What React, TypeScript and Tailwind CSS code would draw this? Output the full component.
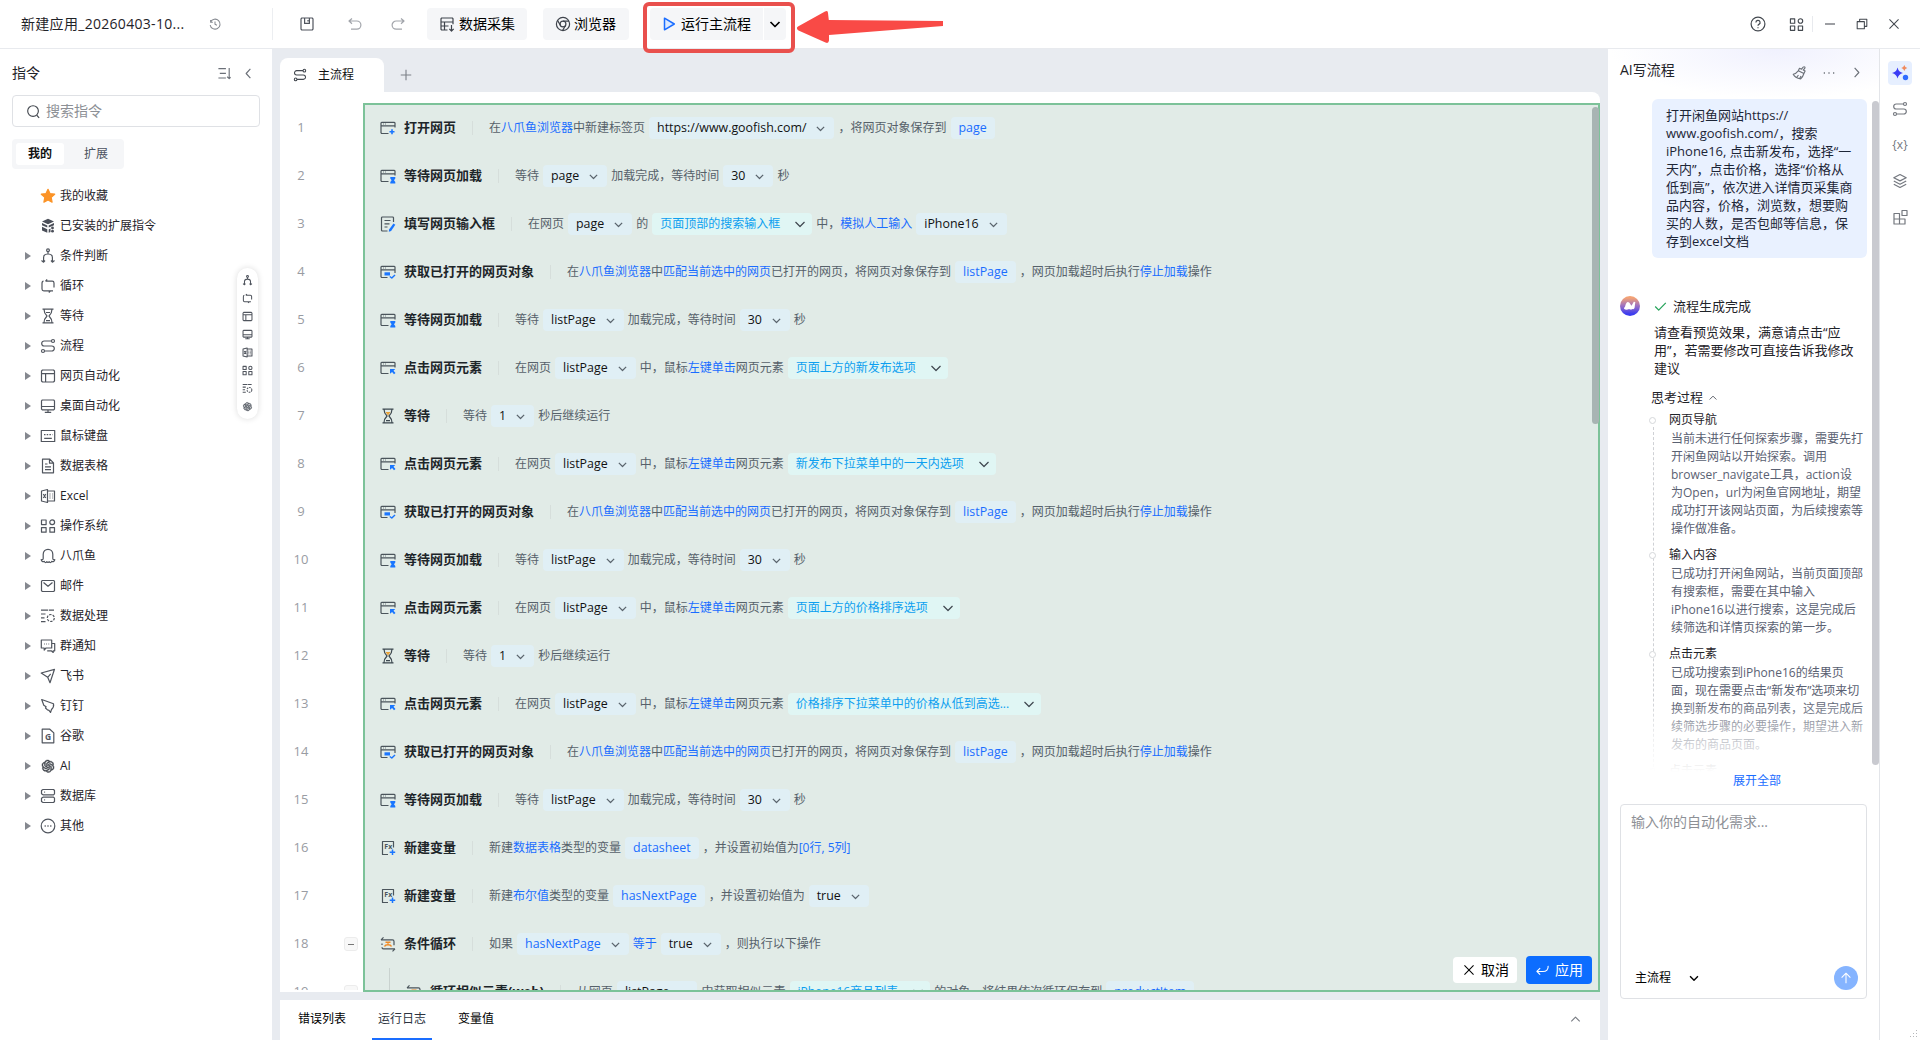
import type { ReactNode } from 'react'
import { AiOutlineOpenAI } from 'react-icons/ai'

/** line icons, drawn on a 16 x 16 grid */
const icons: Record<string, ReactNode> = {
    star: <path fill="#fb9327" stroke="#fb9327" d="M8 1.3l2 4.3 4.7.6-3.5 3.2.9 4.8L8 11.9l-4.1 2.3.9-4.8L1.3 6.2 6 5.6z" />,
    packages: (
        <g fill="currentColor" stroke="none">
            <path d="M8 .8l6 2.7-6 2.7-6-2.7zM2 5l5.3 2.4v2.2L2 7.2zM14 5L8.7 7.4v2.2L14 7.2zM2 8.8l5.3 2.4v3.6L2 12.4zM8.7 11.4l1.8-.8v3.4l-1.8.8z" />
            <circle cx="12.5" cy="9.9" r="1.4" />
            <circle cx="12.5" cy="13.2" r="1.4" />
        </g>
    ),
    branch: (
        <>
            <circle cx="8" cy="2.2" r="1.4" />
            <path d="M8 3.6V6M3.6 14V9.5C3.6 7.2 5.5 6 8 6s4.4 1.2 4.4 3.5V14M1.5 12.5l2.1 1.7 1.4-1.7M11 12.5l1.4 1.7 2.1-1.7" />
        </>
    ),
    loop: <path d="M5.5 3.2h6.7c1 0 1.8.8 1.8 1.8v4.5M5.5 3.2l1.7-1.7M10.5 12.8H3.8c-1 0-1.8-.8-1.8-1.8V5.5c0-1 .5-2.3 1.5-2.3M10.5 12.8l-1.7 1.7M10.5 12.8H13" />,
    hourglass: <path d="M2.5 1.2h11M2.5 14.8h11M4 1.2c0 3.3 1 4.8 3 6.8-2 2-3 3.5-3 6.8M12 1.2c0 3.3-1 4.8-3 6.8 2 2 3 3.5 3 6.8M6 12.6h4M6 4.5h4" />,
    flow: (
        <>
            <circle cx="13" cy="3" r="1.5" />
            <circle cx="3" cy="13" r="1.5" />
            <path d="M11.5 3H4.2a2.5 2.5 0 0 0 0 5h7.6a2.5 2.5 0 0 1 0 5H4.5" />
        </>
    ),
    web: <path d="M2.5 2h11l1 1v10l-1 1h-11l-1-1V3zM1.5 5.6h13M5.6 5.6V14" />,
    desktop: <path d="M2.3 2h11.4l.8.8v8.2l-.8.8H2.3l-.8-.8V2.8zM1.5 8.5h13M8 11.8v2.5M4.8 14.3h6.4" />,
    keyboard: (
        <>
            <path d="M1.3 2.5h13.4v11H1.3zM4.2 10.3h7.6" />
            <path strokeDasharray="1.5 1.2" d="M4 6.6h8.5" />
        </>
    ),
    sheet: <path d="M2.5 1.2h7.3l3.7 3.7v9.9h-11zM9.5 1.5v3.7h3.7M5 6h2.5M5 8.8h6M5 11.6h6" />,
    excel: <path d="M7.5 1.5L1.5 3v10l6 1.5zM7.5 3h7v10h-7M3.3 6l2.5 4M5.8 6L3.3 10M9.5 6h1M9.5 8h1M9.5 10h1M12.3 6h.8M12.3 8h.8M12.3 10h.8" />,
    grid: (
        <>
            <path d="M1.5 2h4.6v4.6H1.5zM1.5 9.6h4.6v4.6H1.5zM9.9 9.6h4.6v4.6H9.9z" />
            <circle cx="12.2" cy="4.3" r="2.4" />
        </>
    ),
    octopus: <path d="M3.2 10.5V6.3C3.2 3.3 5.300 1.300 8 1.300s4.800 2 4.800 5v4.200c.1 1.200.9 1.400 2 1.200-.2 1.600-1.600 2.500-3.200 1.700-.3 1.300-1.600 1.600-2.300.3-.6.900-2 .9-2.600 0-.7 1.300-2 1-2.300-.3-1.600.8-3-.1-3.200-1.700 1.100.2 1.900 0 2-1.200z" />,
    mail: <path d="M2.3 2.5h11.4l.8.8v9.4l-.8.8H2.3l-.8-.8V3.3zM3.5 4.5L8 8.3l4.5-3.8" />,
    process: (
        <>
            <path d="M1 2.2h13M1 6h4.5M1 9.8h3.5M1 13.6h4.5" strokeDasharray="7 .8" />
            <circle cx="10.8" cy="10" r="3.5" strokeDasharray="2.4 1.2" />
        </>
    ),
    chat: <path d="M1.3 2h10.4v8H6l-1.8 2v-2H1.3zM12 5.5h2.7v7.3h-1.5v1.7l-2-1.7H7.2M4 6h.8M6.2 6H7M8.4 6h.8" />,
    plane: <path d="M1.2 5l13.3-3.7L10 14.7 7.7 9.3zM7.7 9.3l3-3.5" />,
    ding: <path d="M1.7 1.5l11.8 4.3c.6 2.4-.5 4.2-2 5.7l-1 3-1.5-2.2-1.5-.4-2-1.9.6-1.2-2.3-1.6z" />,
    google: (
        <>
            <path d="M2.2 1.2h7.6l4 3.7v9.9H2.2z" />
            <text x="8" y="11.5" textAnchor="middle" fontSize="8.5" fontWeight="700" fill="currentColor" stroke="none">G</text>
        </>
    ),
    database: <path d="M3 1.5h10.500l1 1v3.300l-1 1H3l-1.500-1V2.500zM3 9.200h10.500l1 1v3.300l-1 1H3l-1.500-1v-3.300zM4.200 4.100h.9M4.200 11.800h.9" />,
    other: (
        <>
            <circle cx="8" cy="8" r="6.8" />
            <path d="M4.6 8h1.2M7.4 8h1.2M10.2 8h1.2" strokeWidth="1.4" />
        </>
    ),
    save: <path d="M2.8 2h10.4l.8.8v10.4l-.8.8H2.8l-.8-.8V2.8zM5.6 2v5.4h4.8V2M9 4v1.5" />,
    undo: <path d="M5 2.5L2 5l3 2.7M2.2 5h7.6a4 4 0 0 1 0 8.2H4" />,
    redo: <path d="M11 2.5L14 5l-3 2.7M13.8 5H6.2a4 4 0 0 0 0 8.2H12" />,
    history: <path d="M3 3.5V6h2.5M3 5.6a5.7 5.7 0 1 1-.5 3.6M8 5v3.4l2.2 1" />,
    collect: <path d="M8.5 14H2.7l-.7-.7V2.7l.7-.7h10.6l.7.7v5.5M2 6h12M2 10h7.5M5.5 6v8M12.5 9v6M10.3 12.8l2.2 2.2 2.2-2.2" />,
    chrome: (
        <>
            <circle cx="8" cy="8" r="6.6" />
            <circle cx="8" cy="8" r="2.9" />
            <path d="M8 5.1h6M5.5 9.5L2.5 4.4M10.5 9.5l-3 5.1" />
        </>
    ),
    play: <path fill="#dbe9ff" strokeWidth="1.5" d="M3.5 2.2v11.6L13.3 8z" />,
    down: <path d="M3.5 6L8 10.5 12.5 6" />,
    up: <path d="M3.5 10L8 5.5l4.5 4.5" />,
    left: <path d="M10 3L5.5 8l4.5 5" />,
    right: <path d="M6 3l4.5 5L6 13" />,
    sort: <path d="M1.5 2.8h8M3 7.8h6.5M1.5 12.8h8M13 2v11.5M10.8 11.5l2.2 2 1.5-1.5" />,
    search: (
        <>
            <circle cx="7.5" cy="7.5" r="5.7" />
            <path d="M11.5 12l2.5 2.7" />
        </>
    ),
    plus: <path strokeWidth="1.5" d="M8 1v14M1 8h14" />,
    help: (
        <>
            <circle cx="8" cy="8" r="6.9" />
            <path d="M5.9 6.5a2.1 2.1 0 1 1 3 1.9c-.6.3-.9.6-.9 1.3M8 11.2v1" />
        </>
    ),
    minimize: <path d="M2.3 8h11.4" />,
    restore: <path d="M2.5 5.3h8.2v8.2H2.5zM5.3 5V2.5h8.2v8.2H11" />,
    close: <path d="M2.8 2.8l10.4 10.4M13.2 2.8L2.8 13.2" />,
    broom: <path d="M13.8 2.3c-1.3-1.3-2.6.7-3.6 2.2L8 3.5 6.7 6.2l6 2.9L14 6.4l-2-1c.9-1.3 2.6-2.2 1.8-3.1zM6.7 6.2C5 8.3 3.2 9.4 1.3 9.8c1 2.2 4.2 4.4 8 5 1.7-1.5 2.7-3.5 3.4-5.7M5.2 12.8l1.7-2M8.3 14.2l1.3-2.5" />,
    dots: <path strokeWidth="1.6" d="M2 8h1.4M7.3 8h1.4M12.6 8H14" />,
    layers: <path d="M8 1.5l6.2 3.2L8 7.9 1.8 4.7zM1.8 8L8 11.2 14.2 8M1.8 11.3L8 14.5l6.2-3.2" />,
    widgets: <path d="M2 4.5h5.5V10H2zM2 10h5.5v5H2zM7.5 10H13v5H7.5zM10 1.5h5v5h-5z" />,
    vars: <text x="8" y="12.2" textAnchor="middle" fontSize="12" fill="currentColor" stroke="none">{'{x}'}</text>,
    check: <path stroke="#25a35a" strokeWidth="1.5" d="M1.5 8l4.3 4.5L14.5 3.5" />,
    enter: <path d="M14 3c.5 4-2 6-5.5 6H2M5.5 5.5L2 9l3.5 3.5" />,
    arrowUp: <path d="M8 14V2.5M3 7.5l5-5 5 5" />,
    // step icons: browser window with a blue mark
    open: (
        <>
            <path d="M8.5 13.5H1.7l-.7-.7V3l.7-.7h12.6l.7.7v4.5M1 5.8h14M3 4h.7M5.2 4h.7" />
            <path stroke="#1a76ff" strokeWidth="1.6" d="M12 9.3v5M9.5 11.8h5" />
        </>
    ),
    load: (
        <>
            <path d="M8.5 13.5H1.7l-.7-.7V3l.7-.7h12.6l.7.7v4.5M1 5.8h14M3 4h.7M5.2 4h.7" />
            <path fill="#1a76ff" stroke="none" d="M10.3 9h5v1.5l-1.3 1.8 1.3 1.8v1.5h-5v-1.5l1.3-1.8-1.3-1.8z" />
        </>
    ),
    click: (
        <>
            <path d="M8.5 13.5H1.7l-.7-.7V3l.7-.7h12.6l.7.7v4.5M1 5.8h14M3 4h.7M5.2 4h.7" />
            <path fill="#1a76ff" stroke="none" d="M10 9h5.2l-1.7 1.7 2 2.3-1.5 1.3-1.9-2.3L10 13.7z" />
        </>
    ),
    fetch: (
        <>
            <path d="M7.5 13.5H1.7l-.7-.7V3l.7-.7h12.6l.7.7v6M1 5.8h14M3 4h.7M5.2 4h.7" />
            <path fill="#1a76ff" stroke="none" d="M4.5 8.3H10v3.2H4.5z" />
            <path stroke="#1a76ff" strokeWidth="1.5" d="M9.8 12.5l2 1.5 3.2-3" />
        </>
    ),
    input: (
        <>
            <path d="M7.5 15H2.2l-.7-.7V1.7l.7-.7h10.6l.7.7V6M4.5 4.5h6M4.5 7.8h5M4.5 11h3" />
            <path fill="#1a76ff" stroke="none" d="M13.5 7.5l1.8 1.2-4.2 6.3-2.3.8.3-2.4z" />
        </>
    ),
    variable: (
        <>
            <path d="M8 14.5H2.5V1.5h11v6" />
            <text x="4.3" y="9" fontSize="7" fontWeight="700" fill="currentColor" stroke="none">Fx</text>
            <path stroke="#1a76ff" strokeWidth="1.5" d="M12.5 9.5v5.5M9.7 12.3h5.5" />
        </>
    ),
    condLoop: (
        <>
            <path d="M1 3.8h11.5c1 0 1.5.8 1.5 1.7v3.7M1 3.8l2.5-2.5M15 12.8H3.5C2.5 12.8 2 12 2 11.2M15 12.8l-2.5 2.5M2 9V7.5" />
            <path stroke="#f08a24" strokeWidth="1.5" d="M5.5 6.3h5M8 6.3v1.5M4.5 10.5C5.5 8 10.5 8 11.5 10.5" />
        </>
    ),
}

function Icon({ name, className = 'size-4' }: { name: string; className?: string }) {
    return (
        <svg
            viewBox="0 0 16 16"
            fill="none"
            stroke="currentColor"
            strokeWidth={1.2}
            strokeLinejoin="round"
            className={`shrink-0 ${className}`}
        >
            {icons[name]}
        </svg>
    )
}

const menu = [
    ['branch', '条件判断'],
    ['loop', '循环'],
    ['hourglass', '等待'],
    ['flow', '流程'],
    ['web', '网页自动化'],
    ['desktop', '桌面自动化'],
    ['keyboard', '鼠标键盘'],
    ['sheet', '数据表格'],
    ['excel', 'Excel'],
    ['grid', '操作系统'],
    ['octopus', '八爪鱼'],
    ['mail', '邮件'],
    ['process', '数据处理'],
    ['chat', '群通知'],
    ['plane', '飞书'],
    ['ding', '钉钉'],
    ['google', '谷歌'],
    ['ai', 'AI'],
    ['database', '数据库'],
    ['other', '其他'],
]

/** plain string = grey text, otherwise [kind, text] */
type Part = string | ['link' | 'select' | 'var' | 'varSelect' | 'element', string]
type Step = { icon: string; title: string; parts: Part[]; fold?: boolean; nested?: boolean }

const fetchPage: Step = {
    icon: 'fetch',
    title: '获取已打开的网页对象',
    parts: [
        '在', ['link', '八爪鱼浏览器'], '中', ['link', '匹配当前选中的网页'], '已打开的网页，将网页对象保存到',
        ['var', 'listPage'], '，网页加载超时后执行', ['link', '停止加载'], '操作',
    ],
}
const loadPage = (page: string): Step => ({
    icon: 'load',
    title: '等待网页加载',
    parts: ['等待', ['select', page], '加载完成，等待时间', ['select', '30'], '秒'],
})
const clickOn = (target: string): Step => ({
    icon: 'click',
    title: '点击网页元素',
    parts: ['在网页', ['select', 'listPage'], '中，鼠标', ['link', '左键单击'], '网页元素', ['element', target]],
})
const pause: Step = { icon: 'hourglassColor', title: '等待', parts: ['等待', ['select', '1'], '秒后继续运行'] }

const steps: Step[] = [
    {
        icon: 'open',
        title: '打开网页',
        parts: ['在', ['link', '八爪鱼浏览器'], '中新建标签页', ['select', 'https://www.goofish.com/'], '，将网页对象保存到', ['var', 'page']],
    },
    loadPage('page'),
    {
        icon: 'input',
        title: '填写网页输入框',
        parts: ['在网页', ['select', 'page'], '的', ['element', '页面顶部的搜索输入框'], '中，', ['link', '模拟人工输入'], ['select', 'iPhone16']],
    },
    fetchPage,
    loadPage('listPage'),
    clickOn('页面上方的新发布选项'),
    pause,
    clickOn('新发布下拉菜单中的一天内选项'),
    fetchPage,
    loadPage('listPage'),
    clickOn('页面上方的价格排序选项'),
    pause,
    clickOn('价格排序下拉菜单中的价格从低到高选...'),
    fetchPage,
    loadPage('listPage'),
    {
        icon: 'variable',
        title: '新建变量',
        parts: ['新建', ['link', '数据表格'], '类型的变量', ['var', 'datasheet'], '，并设置初始值为', ['link', '[0行, 5列]']],
    },
    {
        icon: 'variable',
        title: '新建变量',
        parts: ['新建', ['link', '布尔值'], '类型的变量', ['var', 'hasNextPage'], '，并设置初始值为', ['select', 'true']],
    },
    {
        icon: 'condLoop',
        title: '条件循环',
        fold: true,
        parts: ['如果', ['varSelect', 'hasNextPage'], ['link', '等于'], ['select', 'true'], '，则执行以下操作'],
    },
    {
        icon: 'condLoop',
        title: '循环相似元素(web)',
        fold: true,
        nested: true,
        parts: ['从网页', ['select', 'listPage'], '中获取相似元素', ['element', 'iPhone16商品列表'], '的对象，将结果依次循环保存到', ['var', 'productItem']],
    },
]

function StepPart({ part }: { part: Part }) {
    if (typeof part === 'string') return <span>{part}</span>
    const [kind, text] = part
    if (kind === 'link') return <span className="text-[#1a6dff]">{text}</span>
    if (kind === 'element') {
        return (
            <span className="mx-1 flex h-[22px] items-center rounded bg-[#e0f6f4] pr-1 pl-2 text-[#0c9ff0]">
                <span>{text}</span>
                <Icon name="down" className="ml-3 size-4 text-[#3f474f]" />
            </span>
        )
    }
    return (
        <span
            className={`mx-1 flex h-[22px] items-center rounded bg-[#e0eff5] pl-2 text-[12.4px]
            ${kind === 'select' ? 'text-[#111]' : 'text-[#1a6dff]'}
            ${kind === 'var' ? 'pr-2' : 'pr-[7px]'}`}
        >
            <span className="pt-px">{text}</span>
            {kind !== 'var' && <Icon name="down" className="ml-2 size-[13px] text-[#5b656e] [stroke-width:1.5]" />}
        </span>
    )
}

function StepRow({ step, index }: { step: Step; index: number }) {
    return (
        <div className="flex h-12 shrink-0 items-center whitespace-nowrap">
            <span className="w-[42px] text-center text-[13px] text-[#999ca3]">{index}</span>
            <span className="flex w-[41px] justify-end pr-[5px]">
                {step.fold && (
                    <span className="flex size-[14px] items-center justify-center rounded-[3px] border border-[#ececec] bg-[#f8f8f8]">
                        <span className="h-px w-1.5 bg-[#777]" />
                    </span>
                )}
            </span>
            <div className={`flex h-full items-center ${step.nested ? 'ml-[26px] border-l border-[#c9d2cf] pl-4' : 'pl-[17px]'}`}>
                {step.icon === 'hourglassColor' ? (
                    <svg viewBox="0 0 16 16" fill="none" stroke="currentColor" strokeWidth={1.2} className="size-4 shrink-0 text-[#3d4850]">
                        {icons.hourglass}
                        <path fill="#e8a33a" stroke="none" d="M5.5 4h5L8 7.5z" />
                    </svg>
                ) : (
                    <Icon name={step.icon} className="size-4 text-[#4b555c]" />
                )}
                <span className="ml-2 text-[13px] font-bold text-[#1d2529]">{step.title}</span>
                <span className="mx-4 h-3.5 w-px bg-[#d6dedb]" />
                <div className="flex items-center text-xs text-[#56616a]">
                    {step.parts.map((part, i) => (
                        <StepPart key={i} part={part} />
                    ))}
                </div>
            </div>
        </div>
    )
}

function Header() {
    return (
        <header className="flex h-[49px] shrink-0 items-center border-b border-[#e8eaee] bg-white text-sm">
            <div className="flex w-[272px] items-center">
                <span className="ml-[21px] w-[187px] tracking-[0.3px] text-[#1f2329]">新建应用_20260403-10...</span>
                <Icon name="history" className="size-[14px] text-[#84888f]" />
            </div>
            <div className="h-8 w-px bg-[#eceef1]" />
            <Icon name="save" className="ml-[26px] size-4 text-[#50555e]" />
            <Icon name="undo" className="ml-8 size-4 text-[#a2a5ab]" />
            <Icon name="redo" className="ml-[27px] size-4 text-[#a2a5ab]" />
            <button className="ml-[21px] flex h-8 w-[100px] items-center rounded bg-[#f5f6f8] pl-3 text-black">
                <Icon name="collect" className="mr-1 size-4 text-[#3f444c]" />
                数据采集
            </button>
            <button className="ml-4 flex h-8 w-[86px] items-center rounded bg-[#f5f6f8] pl-3 text-black">
                <Icon name="chrome" className="mr-[3px] size-4 text-[#3f444c]" />
                浏览器
            </button>
            <div className="relative ml-[21px] flex h-8">
                <button className="flex w-[113px] items-center rounded-l bg-[#f5f6f8] pl-[11px] text-black">
                    <Icon name="play" className="mr-1 size-4 text-[#1a6dff]" />
                    运行主流程
                </button>
                <button className="ml-px flex w-[22px] items-center justify-center rounded-r bg-[#f5f6f8]">
                    <Icon name="down" className="size-4 text-black [stroke-width:1.7]" />
                </button>
                {/* highlight frame and pointer */}
                <div className="absolute -top-1.5 -left-[7px] z-10 h-[51px] w-[152px] rounded-md border-4 border-[#e9504d]" />
                <svg viewBox="0 0 148 36" className="absolute top-0.5 left-[146px] z-10 h-9 w-[148px] fill-[#f94a46]">
                    <path d="M1 18.5Q.5 17.5 2 16.5L29 1.5q3-1.5 3 1.5l.8 7L147 11v5L33 25v5.5q-.5 3.5-3.5 2L2.5 20.5Q1 19.5 1 18.5z" />
                </svg>
            </div>
            <div className="ml-auto flex items-center text-[#43484f]">
                <Icon name="help" className="size-4" />
                <Icon name="grid" className="ml-[23px] size-[15px]" />
                <div className="ml-2 h-4 w-px bg-[#e8eaee]" />
                <Icon name="minimize" className="ml-2.5 size-[14px]" />
                <Icon name="restore" className="ml-[18px] size-[14px]" />
                <Icon name="close" className="mr-[19px] ml-[18px] size-[14px]" />
            </div>
        </header>
    )
}

function Sidebar() {
    return (
        <aside className="relative w-[272px] shrink-0 bg-white">
            <div className="flex h-[46px] items-center pt-0.5 pr-[16px] pl-3 text-sm text-[#1f2329]">
                指令
                <Icon name="sort" className="ml-auto size-[15px] text-[#6b7078]" />
                <Icon name="left" className="ml-[9px] size-[15px] text-[#6b7078]" />
            </div>
            <div className="mx-3 flex h-8 items-center rounded border border-[#dfe1e5] pl-[13px] text-sm text-[#8d9096]">
                <Icon name="search" className="mr-[5px] size-[15px] text-[#43484f]" />
                搜索指令
            </div>
            <div className="mt-3 ml-3 flex h-[30px] w-28 items-center rounded bg-[#f5f6f8] p-1 text-xs">
                <span className="flex h-[22px] w-12 items-center justify-center rounded-[3px] bg-white font-bold text-[#111]">我的</span>
                <span className="flex-1 pl-5 text-[#4c5260]">扩展</span>
            </div>
            <ul className="mt-3 text-xs text-[#1f2329]">
                <li className="flex h-[30px] items-center pl-10">
                    <Icon name="star" className="mr-1 size-4" />
                    我的收藏
                </li>
                <li className="flex h-[30px] items-center pl-10">
                    <Icon name="packages" className="mr-1 size-4 text-[#4a4e58]" />
                    已安装的扩展指令
                </li>
                {menu.map(([icon, label]) => (
                    <li key={label} className="flex h-[30px] items-center pl-[25px]">
                        <svg viewBox="0 0 6 8" className="mr-[9px] h-2 w-1.5 fill-[#85888f]">
                            <path d="M0 0l6 4-6 4z" />
                        </svg>
                        {icon === 'ai' ? (
                            <AiOutlineOpenAI className="mr-1 size-4 stroke-[#43484f] text-[#43484f] [stroke-width:28]" />
                        ) : (
                            <Icon name={icon} className="mr-1 size-4 text-[#50555e]" />
                        )}
                        {label}
                    </li>
                ))}
            </ul>
            {/* quick access strip */}
            <div className="absolute top-[219px] right-[14px] flex h-[151px] w-[21px] flex-col items-center gap-[7px] rounded-full bg-white pt-[7px] text-[#50555e] shadow-[0_0_6px_rgba(0,0,0,0.14)]">
                {['branch', 'loop', 'web', 'desktop', 'excel', 'grid', 'process'].map((name) => (
                    <Icon key={name} name={name} className="size-[11px] [stroke-width:1.5]" />
                ))}
                <AiOutlineOpenAI className="size-[11px] shrink-0 stroke-[#50555e] [stroke-width:30]" />
            </div>
        </aside>
    )
}

function Editor() {
    return (
        <main className="flex w-[1336px] shrink-0 flex-col bg-[#e8ebf0] px-2">
            <div className="flex h-[43px] shrink-0 items-end">
                <div className="flex h-[34px] w-[104px] items-center rounded-t-lg bg-white pl-[13px] text-xs text-[#111]">
                    <Icon name="flow" className="mr-[11px] size-[14px] text-[#43484f]" />
                    主流程
                </div>
                <Icon name="plus" className="mb-[11px] ml-4 size-3 text-[#7d8188]" />
            </div>
            <div className="relative h-[900px] shrink-0 overflow-hidden rounded-tr-lg bg-white">
                {/* generated steps preview */}
                <div className="absolute top-[11px] right-0 bottom-0 left-[83px] border-2 border-[#7cc299] bg-[#e1ebe7]">
                    <div className="absolute top-0.5 -right-px h-[317px] w-[7px] rounded-full bg-[#a8b4b3]" />
                </div>
                <div className="relative h-[898px] overflow-hidden pt-3">
                    {steps.map((step, i) => (
                        <StepRow key={i} step={step} index={i + 1} />
                    ))}
                </div>
                <div className="absolute right-2 bottom-2 flex items-center gap-[9px] text-sm">
                    <button className="flex h-[26px] w-16 items-center rounded bg-white pl-[9px] text-black">
                        <Icon name="close" className="mr-[5px] size-[14px]" />
                        取消
                    </button>
                    <button className="flex h-7 w-[66px] items-center rounded bg-[#0c6dff] pl-[9px] text-white">
                        <Icon name="enter" className="mr-[5px] size-[15px]" />
                        应用
                    </button>
                </div>
            </div>
            <div className="mt-2 flex h-10 shrink-0 items-stretch bg-white text-xs text-black">
                <span className="flex items-center pr-[26px] pb-0.5 pl-[18px]">错误列表</span>
                <span className="flex items-center border-b-2 border-[#1a6dff] px-1.5 text-[#2c3340]">运行日志</span>
                <span className="flex items-center pb-0.5 pl-[26px]">变量值</span>
                <Icon name="up" className="mt-3 mr-[17px] ml-auto size-[15px] text-[#777b82]" />
            </div>
        </main>
    )
}

const thoughts = [
    {
        title: '网页导航',
        lines: ['当前未进行任何探索步骤，需要先打', '开闲鱼网站以开始探索。调用', 'browser_navigate工具，action设', '为Open，url为闲鱼官网地址，期望', '成功打开该网站页面，为后续搜索等', '操作做准备。'],
    },
    {
        title: '输入内容',
        lines: ['已成功打开闲鱼网站，当前页面顶部', '有搜索框，需要在其中输入', 'iPhone16以进行搜索，这是完成后', '续筛选和详情页探索的第一步。'],
    },
    {
        title: '点击元素',
        lines: ['已成功搜索到iPhone16的结果页', '面，现在需要点击“新发布”选项来切', '换到新发布的商品列表，这是完成后', '续筛选步骤的必要操作，期望进入新', '发布的商品页面。'],
    },
    { title: '点击元素', lines: [] },
]

const prompt = [
    '打开闲鱼网站https://',
    'www.goofish.com/，搜索',
    'iPhone16, 点击新发布，选择“一',
    '天内”，点击价格，选择“价格从',
    '低到高”，依次进入详情页采集商',
    '品内容，价格，浏览数，想要购',
    '买的人数，是否包邮等信息，保',
    '存到excel文档',
]

function Lines({ lines }: { lines: string[] }) {
    return (
        <>
            {lines.map((line) => (
                <p key={line}>{line}</p>
            ))}
        </>
    )
}

function AiPanel() {
    return (
        <section className="flex w-[272px] shrink-0 flex-col border-r border-[#e3e5e9] bg-white whitespace-nowrap text-[#1f2329]">
            <div className="flex h-[50px] shrink-0 items-center bg-[radial-gradient(ellipse_at_62%_0%,#f0f1fe,#ffffff_70%)] pr-[15px] pb-2 pl-3 text-sm">
                AI写流程
                <Icon name="broom" className="mt-[5px] ml-auto size-[15px] text-[#6b7078]" />
                <Icon name="dots" className="mt-[5px] ml-[15px] size-[14px] text-[#6b7078]" />
                <Icon name="right" className="mt-[5px] ml-[13px] size-[15px] text-[#6b7078]" />
            </div>
            <div className="relative h-[693px] shrink-0 text-[13px] leading-[18px]">
                <div className="absolute top-0.5 right-0 z-10 h-[664px] w-[7px] rounded-full bg-[#c9cad0]" />
                <div className="ml-11 h-[159px] w-[215px] rounded-md bg-[#e9f1ff] py-[7px] pl-[14px] text-[#1d2637]">
                    <Lines lines={prompt} />
                </div>
                <div className="mt-9 flex h-6 items-center pl-3">
                    <svg viewBox="0 0 20 20" className="size-5">
                        <defs>
                            <linearGradient id="avatar" x1="0" y1="0" x2="0" y2="1">
                                <stop offset="0.1" stopColor="#f3a275" />
                                <stop offset="0.5" stopColor="#9a6fc4" />
                                <stop offset="0.9" stopColor="#3b3cf0" />
                            </linearGradient>
                        </defs>
                        <circle cx="10" cy="10" r="10" fill="url(#avatar)" />
                        <path fill="#fff" d="M4 12.8q-.2-1.200 1-2.100Q6 6 8 6q1.600 0 2.600 2.600l.9 1.200 2.300-4 1.500.2-.7 5.800q-.5 1.800-2.200 1.300-1.700 1-3.200 0-3.300 1.300-5.200-.3z" />
                    </svg>
                    <Icon name="check" className="ml-[14px] size-[13px]" />
                    <span className="ml-1.5">流程生成完成</span>
                </div>
                <div className="mt-[5px] pl-[46px]">
                    <Lines lines={['请查看预览效果，满意请点击“应', '用”，若需要修改可直接告诉我修改', '建议']} />
                </div>
                <div className="mt-[11px] flex items-center pl-[43px]">
                    思考过程
                    <Icon name="up" className="mt-0.5 ml-1 size-3 text-[#50555e]" />
                </div>
                <div className="relative mt-[5px] ml-[41px] h-[361px] overflow-hidden text-xs leading-[18px]">
                    <div className="absolute top-4 bottom-0 left-1 border-l border-dashed border-[#cfd1d5]" />
                    {thoughts.map((thought, i) => (
                        <div key={i} className="relative mb-[8px] pl-5">
                            <span className="absolute top-1.5 left-0 size-[7px] rounded-full border border-[#d5d7da] bg-white" />
                            <p className="mb-px">{thought.title}</p>
                            <div className="pl-0.5 text-[#5a6172]">
                                <Lines lines={thought.lines} />
                            </div>
                        </div>
                    ))}
                    <div className="absolute inset-x-0 bottom-0 h-[72px] bg-gradient-to-t from-white via-white/60 to-transparent" />
                </div>
                <p className="ml-[125px] text-xs leading-[18px] text-[#1a6dff]">展开全部</p>
            </div>
            <div className="mt-3 ml-3 flex h-[195px] w-[247px] shrink-0 flex-col justify-between rounded border border-[#dfe1e5] pt-[7px] pr-2 pb-2 pl-2.5">
                <span className="text-sm text-[#8d9096]">输入你的自动化需求...</span>
                <div className="flex items-center pl-1 text-xs text-black">
                    主流程
                    <Icon name="down" className="ml-4 size-[14px] [stroke-width:1.6]" />
                    <span className="ml-auto flex size-6 items-center justify-center rounded-full bg-[#85b4ff]">
                        <Icon name="arrowUp" className="size-[14px] text-white" />
                    </span>
                </div>
            </div>
        </section>
    )
}

function Rail() {
    return (
        <nav className="relative flex flex-1 flex-col items-center bg-white pt-3 text-[#74787f]">
            <span className="mb-4 flex size-6 items-center justify-center rounded bg-[#e6efff]">
                <svg viewBox="0 0 18 18" className="size-[18px]">
                    <path fill="#3b3cf5" d="M6.5 3.5q1 4.5 5.5 5.5-4.5 1-5.5 5.5Q5.5 10 1 9q4.5-1 5.5-5.5z" />
                    <path fill="#f08a5d" d="M13.3 1q.6 2.4 3 3-2.4.6-3 3-.6-2.4-3-3 2.4-.6 3-3z" />
                    <circle cx="14.5" cy="13.5" r="2.7" fill="#2f6bff" />
                </svg>
            </span>
            <div className="flex flex-col gap-5">
                <Icon name="flow" className="size-4" />
                <Icon name="vars" className="size-4" />
                <Icon name="layers" className="size-4" />
                <Icon name="widgets" className="size-4" />
            </div>
            <svg viewBox="0 0 8 8" className="absolute right-0.5 bottom-0.5 size-2 fill-[#b5b7ba]">
                <path d="M6 0h1v1H6zM6 3h1v1H6zM3 3h1v1H3zM6 6h1v1H6zM3 6h1v1H3zM0 6h1v1H0z" />
            </svg>
        </nav>
    )
}

export default function App() {
    return (
        <div className="flex h-[1040px] w-[1920px] flex-col overflow-hidden bg-white font-['Open_Sans','Noto_Sans_CJK_SC',sans-serif]">
            <Header />
            <div className="flex min-h-0 flex-1">
                <Sidebar />
                <Editor />
                <AiPanel />
                <Rail />
            </div>
        </div>
    )
}
